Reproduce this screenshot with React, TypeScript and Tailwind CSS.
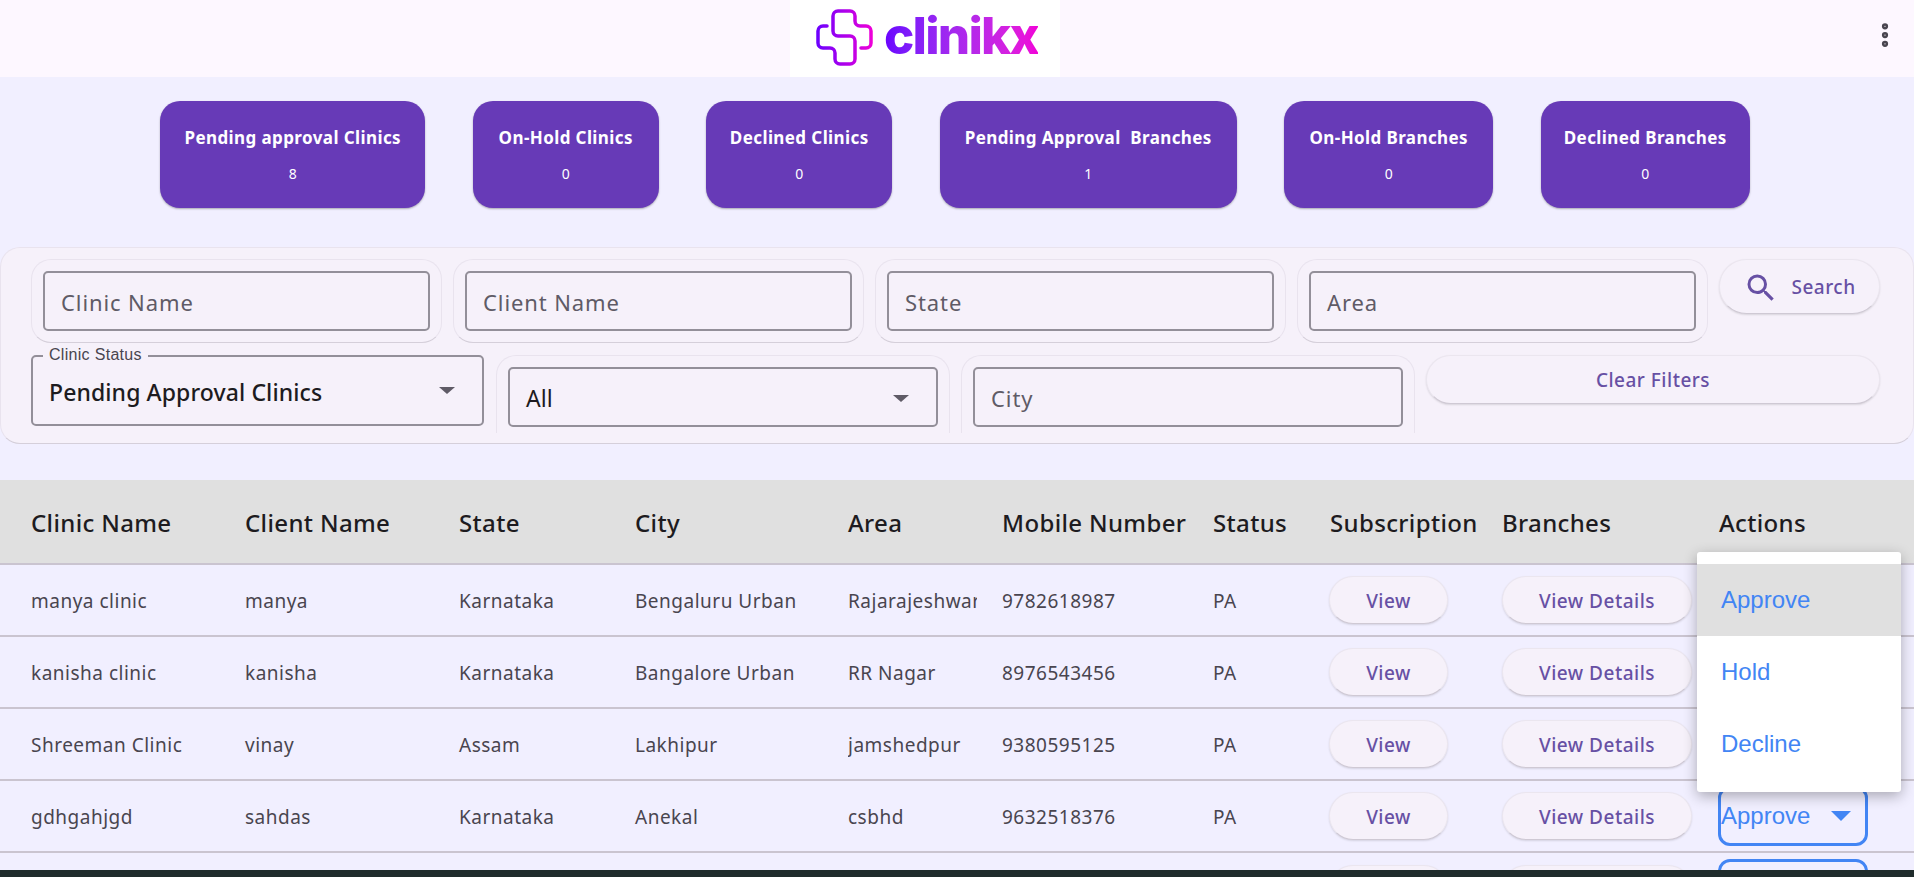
import { MoreVertical } from 'lucide-react';
import { MdSearch } from 'react-icons/md';

const cards = [
  { title: 'Pending approval Clinics', count: 8, w: 'w-[265px]' },
  { title: 'On-Hold Clinics', count: 0, w: 'w-[186px]' },
  { title: 'Declined Clinics', count: 0, w: 'w-[186px]' },
  { title: 'Pending Approval  Branches', count: 1, w: 'w-[297px]' },
  { title: 'On-Hold Branches', count: 0, w: 'w-[209px]' },
  { title: 'Declined Branches', count: 0, w: 'w-[209px]' },
];

const rows = [
  ['manya clinic', 'manya', 'Karnataka', 'Bengaluru Urban', 'Rajarajeshwari', '9782618987'],
  ['kanisha clinic', 'kanisha', 'Karnataka', 'Bangalore Urban', 'RR Nagar', '8976543456'],
  ['Shreeman Clinic', 'vinay', 'Assam', 'Lakhipur', 'jamshedpur', '9380595125'],
  ['gdhgahjgd', 'sahdas', 'Karnataka', 'Anekal', 'csbhd', '9632518376'],
];

const columns = ['Clinic Name', 'Client Name', 'State', 'City', 'Area', 'Mobile Number', 'Status', 'Subscription', 'Branches', 'Actions'];

const grid = 'grid grid-cols-[245px_214px_176px_213px_154px_211px_117px_172px_217px_1fr]';
const font = "font-['Noto_Sans',sans-serif]";

function Logo() {
  return (
    <div className="flex h-[77px] w-[270px] items-center gap-[11px] bg-white pl-[26px]">
      <svg width="57" height="57" viewBox="0 0 57 57" fill="none" className="mt-[-12px] shrink-0 translate-y-[5px]">
        <defs>
          <linearGradient id="plus" x1="0" y1="0" x2="57" y2="0" gradientUnits="userSpaceOnUse">
            <stop offset="0" stopColor="#6a00ff" />
            <stop offset="1" stopColor="#f000d8" />
          </linearGradient>
        </defs>
        <path
          d="M11 17H7a5 5 0 0 0-5 5v12a5 5 0 0 0 5 5h7a5 5 0 0 1 5 5v6a5 5 0 0 0 5 5h10a5 5 0 0 0 5-5V32a5 5 0 0 0-5-5H22a5 5 0 0 1-5-5V7a5 5 0 0 1 5-5h12a5 5 0 0 1 5 5v5a5 5 0 0 0 5 5h6a5 5 0 0 1 5 5v12a5 5 0 0 1-5 5h-5"
          stroke="url(#plus)"
          strokeWidth="3.5"
          strokeLinecap="round"
        />
      </svg>
      <span className="mt-[-6px] bg-gradient-to-r from-[#6a00ff] to-[#f000d8] bg-clip-text font-['Inter',sans-serif] text-[51px] leading-[60px] font-extrabold tracking-[-1.8px] text-transparent">
        clinikx
      </span>
    </div>
  );
}

function TextField({ label, className }: { label: string; className: string }) {
  return (
    <div className={`h-[84px] rounded-[20px] border border-[#e9e3ee] border-b-[#d5cfda] bg-[#f6f1fa] p-[11px] ${className}`}>
      <div className="flex h-[60px] items-center rounded-[5px] border-2 border-[#938f99] pt-[2px] pl-[16px] text-[22px] tracking-[0.9px] text-[#5f5b66]">
        {label}
      </div>
    </div>
  );
}

function Pill({ children, className }: { children?: React.ReactNode; className: string }) {
  return (
    <button className={`flex items-center justify-center rounded-full border border-[#ebe6ef] border-b-[#cfc9d4] bg-[#f6f1fa] pt-[2px] text-[19px] font-medium tracking-[0.5px] text-[#6750a4] shadow-[0_1px_2px_rgba(0,0,0,0.12)] ${className}`}>
      {children}
    </button>
  );
}

export default function App() {
  return (
    <div className={`flex h-screen flex-col overflow-hidden bg-[#f1efff] ${font}`}>
      <header className="relative flex h-[77px] shrink-0 justify-center bg-[#fdf7ff] pr-[64px]">
        <Logo />
        <MoreVertical className="absolute top-[20px] right-[14px] h-[30px] w-[30px] text-[#49454f]" strokeWidth={3} />
      </header>

      <main className="min-h-0 flex-1 overflow-hidden">
        <section className="flex justify-center gap-[47.5px] pt-[24px] pr-[4px]">
          {cards.map((c) => (
            <div
              key={c.title}
              className={`flex h-[107px] flex-col items-center rounded-[20px] bg-[#673ab7] pt-[25px] text-white shadow-[0_1px_2px_rgba(0,0,0,0.3)] ${c.w}`}
            >
              <span className="text-[17px] leading-[24px] font-bold tracking-[0.4px] whitespace-pre">{c.title}</span>
              <span className="mt-[14px] text-[14px] leading-[20px]">{c.count}</span>
            </div>
          ))}
        </section>

        <section className="mt-[39px] h-[197px] overflow-hidden rounded-[20px] border border-[#e9e3ee] border-b-[#d5cfda] bg-[#f6f1fa] pt-[11px] pl-[30px]">
          <div className="flex">
            <TextField label="Clinic Name" className="w-[411px]" />
            <TextField label="Client Name" className="ml-[11px] w-[411px]" />
            <TextField label="State" className="ml-[11px] w-[411px]" />
            <TextField label="Area" className="ml-[11px] w-[411px]" />
            <Pill className="ml-[11px] h-[55px] w-[161px] gap-[12px]">
              <MdSearch size={36} />
              Search
            </Pill>
          </div>

          <div className="mt-[12px] flex">
            <div className="relative flex h-[71px] w-[453px] items-center justify-between rounded-[5px] border-2 border-[#938f99] pr-[27px] pl-[16px] text-[23px] font-medium tracking-[0.1px] text-[#1d1b20]">
              <span className="absolute top-[-11px] left-[10px] bg-[#f6f1fa] px-[6px] font-['Liberation_Sans',sans-serif] text-[16px] leading-[18px] font-normal tracking-[0.3px] text-[#49454f]">
                Clinic Status
              </span>
              <span className="mt-[3px]">Pending Approval Clinics</span>
              <span className="h-0 w-0 border-x-[8px] border-t-[7px] border-x-transparent border-t-[#5f5b66]" />
            </div>

            <div className="ml-[12px] h-[78px] w-[454px] rounded-t-[20px] border-x border-t border-[#e9e3ee] p-[11px]">
              <div className="flex h-[60px] items-center justify-between rounded-[5px] border-2 border-[#938f99] pt-[2px] pr-[27px] pl-[16px] text-[23px] text-[#1d1b20]">
                All
                <span className="h-0 w-0 border-x-[8px] border-t-[7px] border-x-transparent border-t-[#5f5b66]" />
              </div>
            </div>

            <div className="ml-[11px] h-[78px] w-[454px] rounded-t-[20px] border-x border-t border-[#e9e3ee] p-[11px]">
              <div className="flex h-[60px] items-center rounded-[5px] border-2 border-[#938f99] pt-[2px] pl-[16px] text-[22px] tracking-[0.9px] text-[#5f5b66]">
                City
              </div>
            </div>

            <Pill className="ml-[11px] h-[49px] w-[454px]">Clear Filters</Pill>
          </div>
        </section>

        <section className="relative mt-[36px]">
          <div className={`${grid} h-[85px] items-center border-b-2 border-[#cac4d0] bg-[#e0e0e0] pt-[3px] text-[24px] font-medium tracking-[0.35px] text-[#1d1b20]`}>
            {columns.map((c, i) => (
              <span key={c} className={i === 0 ? 'pl-[31px]' : ''}>
                {c}
              </span>
            ))}
          </div>

          {rows.map((r, i) => (
            <div key={r[0]} className={`${grid} h-[72px] items-center border-b-2 border-[#cac4d0] text-[19px] tracking-[0.5px] text-[#49454f]`}>
              <span className="pt-[2px] pl-[31px]">{r[0]}</span>
              <span className="pt-[2px]">{r[1]}</span>
              <span className="pt-[2px]">{r[2]}</span>
              <span className="pt-[2px]">{r[3]}</span>
              <span className="w-[129px] overflow-hidden pt-[2px] whitespace-nowrap">{r[4]}</span>
              <span className="pt-[2px]">{r[5]}</span>
              <span className="pt-[2px]">PA</span>
              <Pill className="ml-[-1px] h-[48px] w-[119px]">View</Pill>
              <Pill className="h-[48px] w-[190px]">View Details</Pill>
              {/* rows 1-3 sit behind the open menu */}
              {i === 3 && (
                <div className="ml-[-1px] flex h-[60px] w-[150px] items-center justify-between rounded-[12px] border-[3px] border-[#4285f4] pr-[14px] font-['Liberation_Sans',sans-serif] text-[24px] tracking-normal text-[#4285f4]">
                  Approve
                  <span className="h-0 w-0 border-x-[10px] border-t-[10px] border-x-transparent border-t-[#4285f4]" />
                </div>
              )}
            </div>
          ))}

          <div className={`${grid} h-[72px] items-center`}>
            <span className="col-start-8">
              <Pill className="ml-[-1px] h-[48px] w-[119px]" />
            </span>
            <span>
              <Pill className="h-[48px] w-[190px]" />
            </span>
            <div className="ml-[-1px] h-[60px] w-[150px] rounded-[12px] border-[3px] border-[#4285f4]" />
          </div>

          {/* open actions menu */}
          <div className="absolute top-[72px] right-[13px] z-10 w-[204px] rounded-[3px] bg-white py-[12px] font-['Liberation_Sans',sans-serif] text-[24px] text-[#4285f4] shadow-[0_4px_14px_rgba(0,0,0,0.3)]">
            <div className="flex h-[72px] items-center bg-[#e0e0e0] pl-[24px]">Approve</div>
            <div className="flex h-[72px] items-center pl-[24px]">Hold</div>
            <div className="flex h-[72px] items-center pl-[24px]">Decline</div>
          </div>
        </section>
      </main>

      <div className="h-[7px] shrink-0 bg-[#1f2c2c]" />
    </div>
  );
}
